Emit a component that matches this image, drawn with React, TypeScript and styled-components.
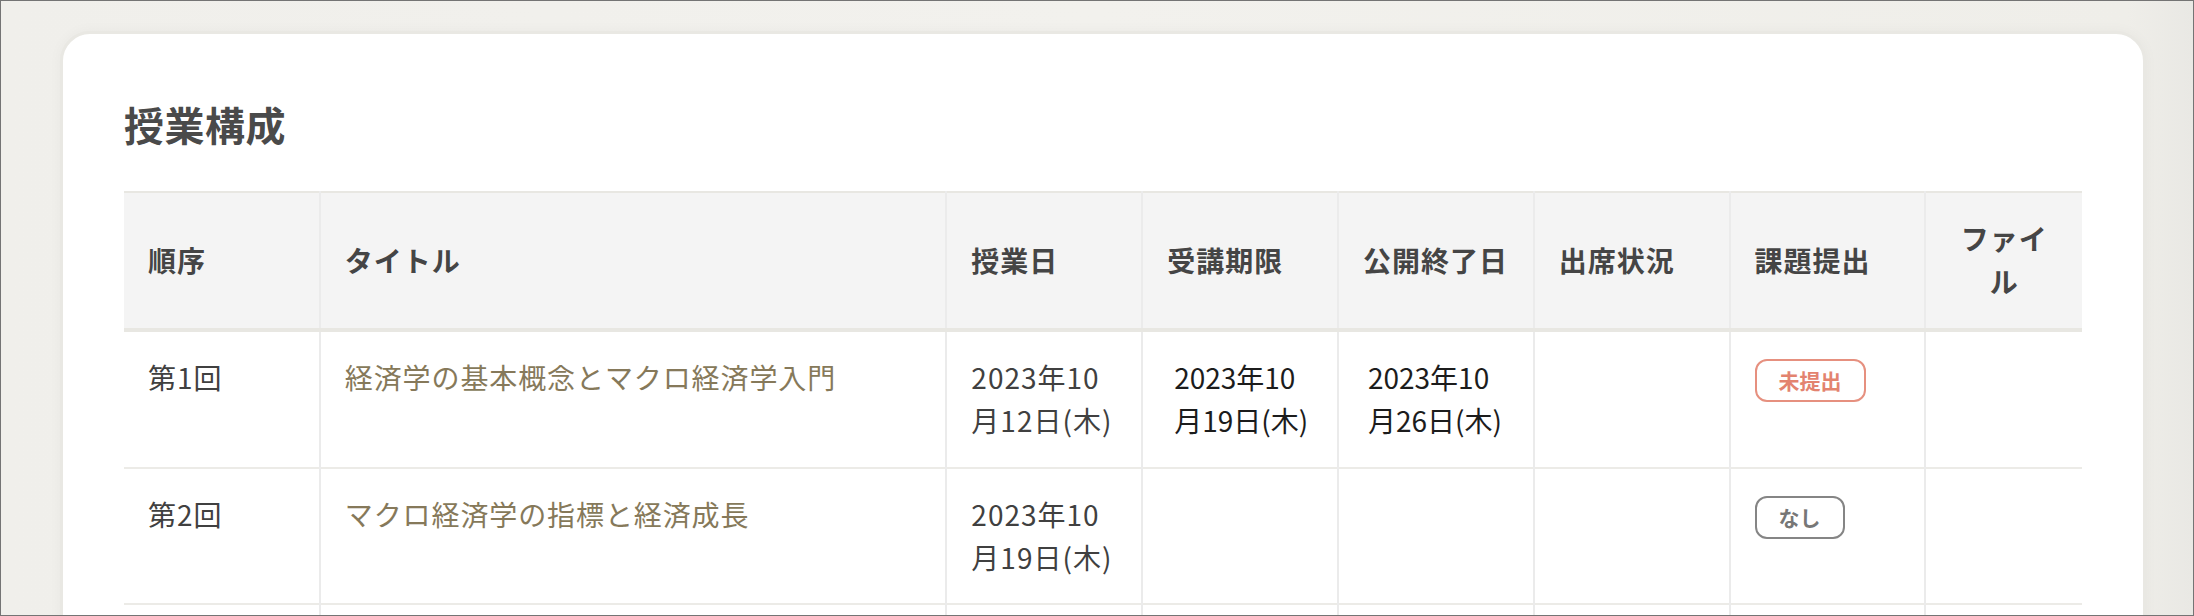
import React from "react";
import styled, { createGlobalStyle } from "styled-components";

const GlobalStyle = createGlobalStyle`
  html, body {
    margin: 0;
    padding: 0;
    overflow: hidden;
    background: #f1f0ec;
  }
  * { box-sizing: border-box; }
`;

const Frame = styled.div`
  height: 616px;
  border: 1px solid #747474;
  overflow: hidden;
  padding: 30px 47px 0 59px;
  background: linear-gradient(90deg, #f0efeb 0%, #f2f1ed 50%, #efeee9 97%, #e9e8e4 100%);
  font-family: "Noto Sans CJK JP", "Noto Sans", sans-serif;
`;

const Card = styled.section`
  background: #ffffff;
  border: 3px solid #e9e8e3;
  border-radius: 30px;
  padding: 60px 61px;
  box-shadow: 0 0 14px rgba(0, 0, 0, 0.035);
`;

const Title = styled.h2`
  margin: 0 0 37px;
  font-size: 40px;
  line-height: 60px;
  font-weight: 700;
  color: #4a4a4a;
  letter-spacing: 0.5px;
`;

const Table = styled.table`
  width: 100%;
  table-layout: fixed;
  border-collapse: collapse;
  border-top: 2px solid #e8e7e2;
`;

const HeadRow = styled.tr`
  background: #f4f4f4;
  border-bottom: 4px solid #e8e7e2;
`;

const HeadCell = styled.th<{ $align?: "left" | "center" }>`
  padding: 24px 24px;
  text-align: ${(p) => p.$align ?? "left"};
  vertical-align: middle;
  font-size: 28px;
  line-height: 1.55;
  font-weight: 700;
  color: #454545;
  letter-spacing: 1px;
  border-left: 2px solid #ebebeb;
  &:first-child { border-left: none; }
`;

const Row = styled.tr<{ $placeholder?: boolean }>`
  border-bottom: 2px solid #ecebe7;
  height: ${(p) => (p.$placeholder ? "135px" : "auto")};
`;

const Cell = styled.td<{ $tone?: "plain" | "dark"; $inset?: number }>`
  padding: 24px 24px 24px ${(p) => p.$inset ?? 24}px;
  vertical-align: top;
  font-size: 28px;
  line-height: 1.55;
  color: ${(p) => (p.$tone === "dark" ? "#1c1c1c" : "#404040")};
  letter-spacing: ${(p) => (p.$tone === "dark" ? "0" : "1px")};
  border-left: 2px solid #ebebeb;
  &:first-child { border-left: none; }
`;

const LessonLink = styled.a`
  color: #86795a;
  text-decoration: none;
  letter-spacing: 0.9px;
  cursor: pointer;
`;

const Badge = styled.span<{ $kind: "pending" | "none" }>`
  display: inline-block;
  padding: 4px 22px;
  border: 2px solid ${(p) => (p.$kind === "pending" ? "#e6907f" : "#858585")};
  border-radius: 12px;
  font-size: 21px;
  line-height: 1.5;
  font-weight: 700;
  letter-spacing: 0;
  color: ${(p) => (p.$kind === "pending" ? "#e3836f" : "#777777")};
`;

type Lesson = {
  order: string;
  title: string;
  date: [string, string];
  deadline?: [string, string];
  closing?: [string, string];
  task?: { kind: "pending" | "none"; label: string };
};

const lessons: Lesson[] = [
  {
    order: "第1回",
    title: "経済学の基本概念とマクロ経済学入門",
    date: ["2023年10", "月12日(木)"],
    deadline: ["2023年10", "月19日(木)"],
    closing: ["2023年10", "月26日(木)"],
    task: { kind: "pending", label: "未提出" },
  },
  {
    order: "第2回",
    title: "マクロ経済学の指標と経済成長",
    date: ["2023年10", "月19日(木)"],
    task: { kind: "none", label: "なし" },
  },
];

const TwoLine = ({ lines }: { lines?: [string, string] }) =>
  lines ? (
    <>
      {lines[0]}
      <br />
      {lines[1]}
    </>
  ) : null;

const columns = ["10%", "32%", "10%", "10%", "10%", "10%", "10%", "8%"];

export default function App() {
  return (
    <>
      <GlobalStyle />
      <Frame>
        <Card>
          <Title>授業構成</Title>
          <Table>
            <colgroup>
              {columns.map((w, i) => (
                <col key={i} style={{ width: w }} />
              ))}
            </colgroup>
            <thead>
              <HeadRow>
                <HeadCell>順序</HeadCell>
                <HeadCell>タイトル</HeadCell>
                <HeadCell>授業日</HeadCell>
                <HeadCell>受講期限</HeadCell>
                <HeadCell>公開終了日</HeadCell>
                <HeadCell>出席状況</HeadCell>
                <HeadCell>課題提出</HeadCell>
                <HeadCell $align="center">ファイル</HeadCell>
              </HeadRow>
            </thead>
            <tbody>
              {lessons.map((l) => (
                <Row key={l.order}>
                  <Cell>{l.order}</Cell>
                  <Cell>
                    <LessonLink>{l.title}</LessonLink>
                  </Cell>
                  <Cell>
                    <TwoLine lines={l.date} />
                  </Cell>
                  <Cell $tone="dark" $inset={31}>
                    <TwoLine lines={l.deadline} />
                  </Cell>
                  <Cell $tone="dark" $inset={29}>
                    <TwoLine lines={l.closing} />
                  </Cell>
                  <Cell />
                  <Cell>
                    {l.task && <Badge $kind={l.task.kind}>{l.task.label}</Badge>}
                  </Cell>
                  <Cell />
                </Row>
              ))}
              <Row $placeholder>
                {columns.map((_, i) => (
                  <Cell key={i} />
                ))}
              </Row>
            </tbody>
          </Table>
        </Card>
      </Frame>
    </>
  );
}
